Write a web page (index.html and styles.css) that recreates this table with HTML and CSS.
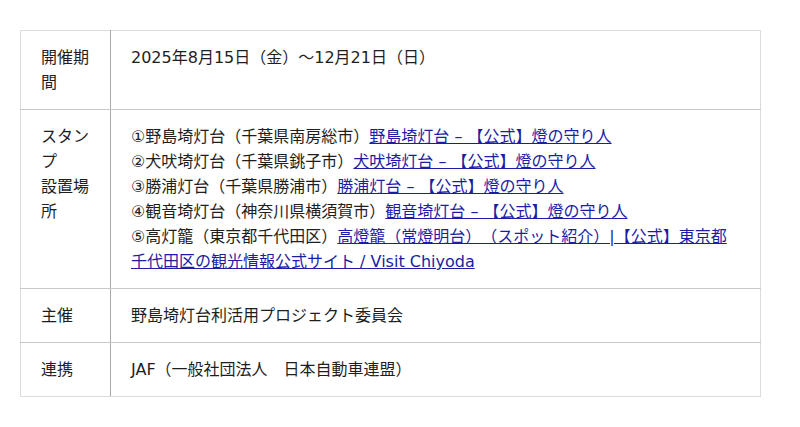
FILE: index.html
```html
<!DOCTYPE html>
<html lang="ja">
<head>
<meta charset="utf-8">
<link rel="stylesheet" href="styles.css">
</head>
<body>
<table class="info">
  <tr>
    <th>開催期間</th>
    <td>2025年8月15日（金）～12月21日（日）</td>
  </tr>
  <tr>
    <th>スタンプ<br>設置場所</th>
    <td>①野島埼灯台（千葉県南房総市）<a href="#">野島埼灯台 – 【公式】燈の守り人</a><br>②犬吠埼灯台（千葉県銚子市）<a href="#">犬吠埼灯台 – 【公式】燈の守り人</a><br>③勝浦灯台（千葉県勝浦市）<a href="#">勝浦灯台 – 【公式】燈の守り人</a><br>④観音埼灯台（神奈川県横須賀市）<a href="#">観音埼灯台 – 【公式】燈の守り人</a><br>⑤高灯籠（東京都千代田区）<a href="#">高燈籠（常燈明台）（スポット紹介）|【公式】東京都千代田区の観光情報公式サイト / Visit Chiyoda</a></td>
  </tr>
  <tr>
    <th>主催</th>
    <td>野島埼灯台利活用プロジェクト委員会</td>
  </tr>
  <tr>
    <th>連携</th>
    <td>JAF（一般社団法人　日本自動車連盟）</td>
  </tr>
</table>
</body>
</html>
```

FILE: styles.css
```css
html, body {
  margin: 0;
  background: #fff;
}
body {
  padding: 30px 39px 0 20px;
  font-family: "DejaVu Sans", "Noto Sans CJK JP", sans-serif;
  font-size: 16px;
  line-height: 25px;
  color: #1e1e1e;
  text-spacing-trim: space-all;
}
.info {
  width: 741px;
  border-collapse: collapse;
  border: 1px solid #dcdcdc;
}
.info th,
.info td {
  padding: 14px 20px;
  text-align: left;
  vertical-align: top;
  font-weight: normal;
  border-top: 1px solid #c8c8c8;
  border-bottom: 1px solid #c8c8c8;
}
.info tr:first-child th,
.info tr:first-child td {
  border-top-color: #dcdcdc;
}
.info tr:last-child th,
.info tr:last-child td {
  border-bottom-color: #dcdcdc;
}
.info th {
  width: 49px;
  border-right: 1px solid #a8a8a8;
}
.info a {
  color: #1c1ca6;
  text-decoration: underline;
}
```
